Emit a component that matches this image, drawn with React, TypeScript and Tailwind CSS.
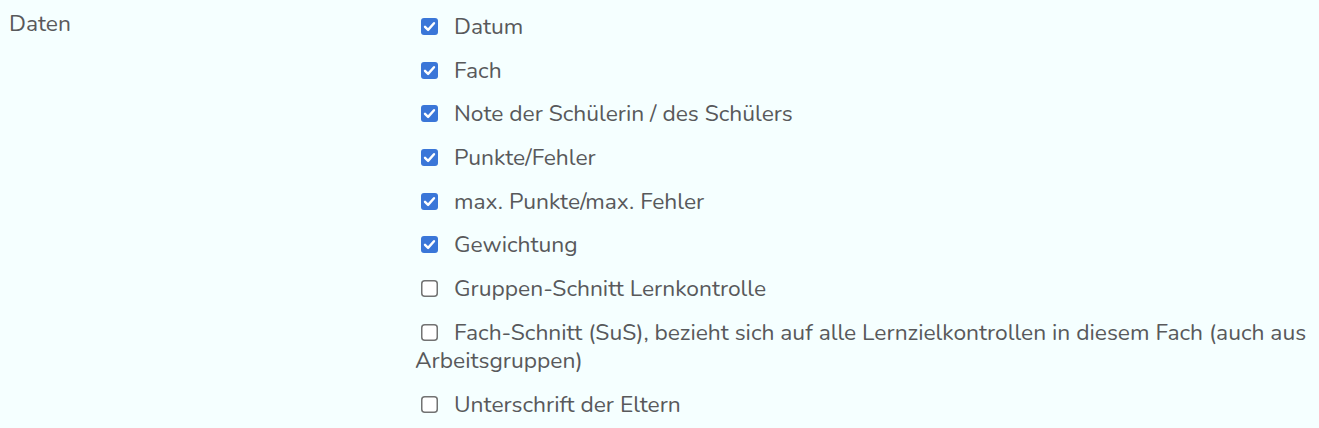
import React from "react";

const items: { label: string; checked: boolean }[] = [
  { label: "Datum", checked: true },
  { label: "Fach", checked: true },
  { label: "Note der Schülerin / des Schülers", checked: true },
  { label: "Punkte/Fehler", checked: true },
  { label: "max. Punkte/max. Fehler", checked: true },
  { label: "Gewichtung", checked: true },
  { label: "Gruppen-Schnitt Lernkontrolle", checked: false },
  {
    label:
      "Fach-Schnitt (SuS), bezieht sich auf alle Lernzielkontrollen in diesem Fach (auch aus Arbeitsgruppen)",
    checked: false,
  },
  { label: "Unterschrift der Eltern", checked: false },
];

function Box({ checked }: { checked: boolean }) {
  return (
    <span className="inline-block w-[17px] h-[17px] ml-[6px] mr-[16px] align-[-1px]">
      {checked ? (
        <svg width="17" height="17" viewBox="0 0 17 17">
          <rect x="0" y="0" width="17" height="17" rx="3" fill="#3a76d8" />
          <path
            d="M4 8.8 L7.1 11.9 L13 5.2"
            fill="none"
            stroke="#fff"
            strokeWidth="2.4"
            strokeLinecap="round"
            strokeLinejoin="round"
          />
        </svg>
      ) : (
        <svg width="17" height="17" viewBox="0 0 17 17">
          <rect x="0.75" y="0.75" width="15.5" height="15.5" rx="3" fill="#fff" stroke="#727272" strokeWidth="1.5" />
        </svg>
      )}
    </span>
  );
}

export default function App() {
  return (
    <div
      className="min-h-[428px] bg-[#f5ffff] text-[#58595b] text-[22.8px] leading-[28px]"
      style={{ fontFamily: "Nunito, 'Open Sans', sans-serif" }}
    >
      <div className="grid grid-cols-[415px_1fr] pr-[8px]">
        <div className="pl-[9px] pt-[10px]">Daten</div>
        <div className="pt-[13px]">
          {items.map((it) => (
            <div key={it.label} className="mb-[15.7px]">
              <Box checked={it.checked} />
              {it.label}
            </div>
          ))}
        </div>
      </div>
    </div>
  );
}
